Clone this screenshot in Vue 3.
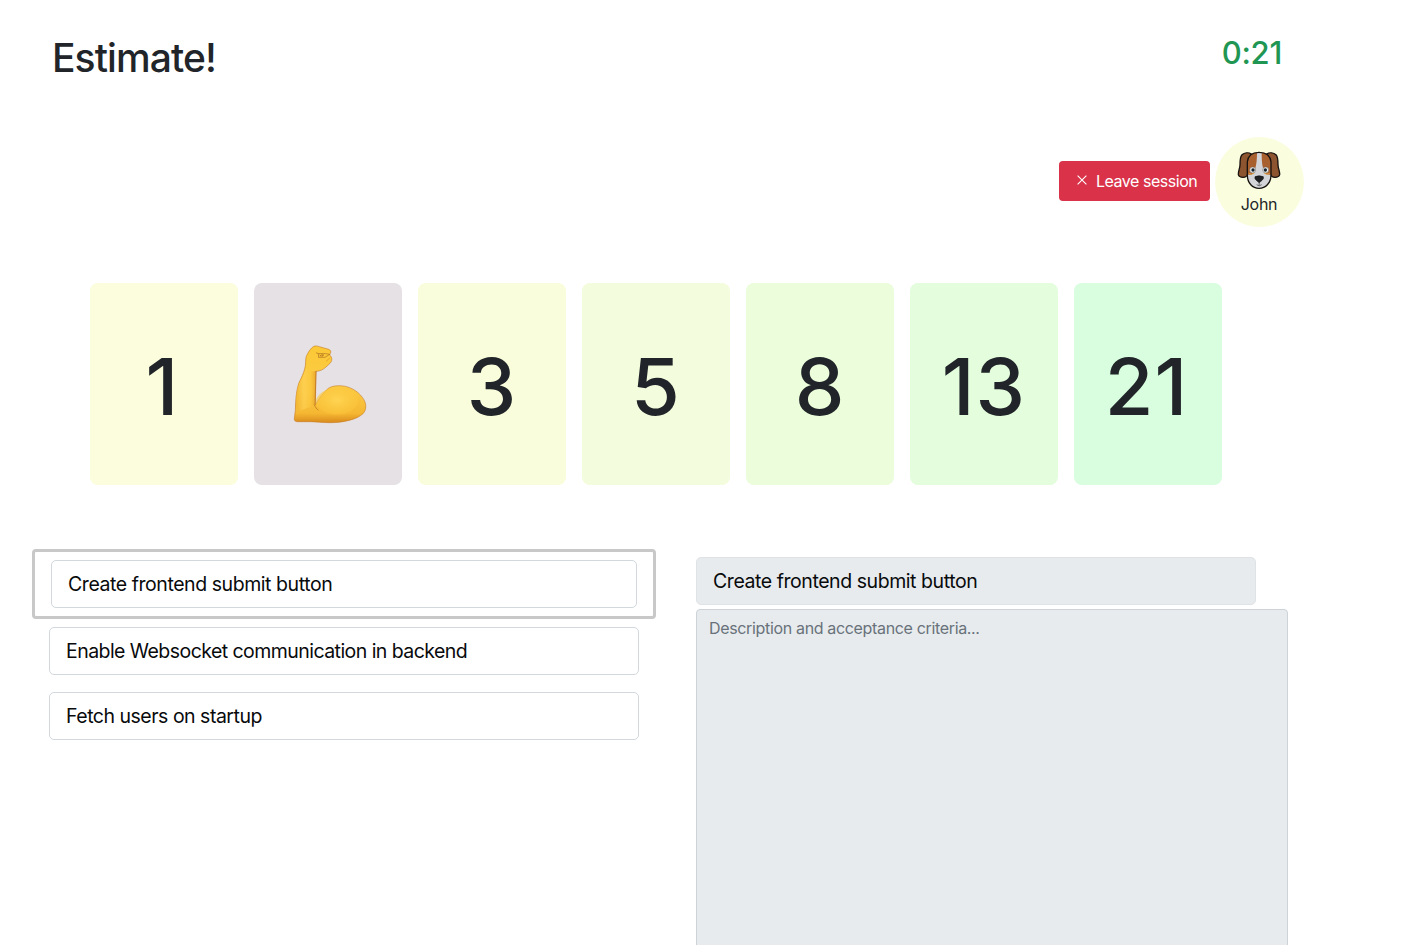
<script setup>
const cards = [
  { value: '1', tone: 't1' },
  { value: '2', tone: 'picked', picked: true },
  { value: '3', tone: 't3' },
  { value: '5', tone: 't5' },
  { value: '8', tone: 't8' },
  { value: '13', tone: 't13' },
  { value: '21', tone: 't21' },
]
</script>

<template>
  <main class="page">
    <header class="header">
      <h1 class="title">Estimate!</h1>
      <div class="timer">0:21</div>
    </header>

    <section class="user-bar">
      <button class="leave">
        <svg class="cross" viewBox="0 0 10 10"><path d="M.6 .6 9.4 9.4M9.4 .6 .6 9.4" /></svg>
        <span class="leave-text">Leave session</span>
      </button>
      <div class="avatar">
        <svg class="dog" viewBox="9 9 132 116">
          <defs>
            <clipPath id="head"><path d="M75 13C54 13 42 23 40 42V80C40 106 56 121 75 121S111 106 111 80V42C109 23 97 13 75 13Z" /></clipPath>
          </defs>
          <g stroke="#17120f" stroke-width="4" stroke-linejoin="round" fill="#8d552f">
            <path d="M52 18C43 12 31 14 24 20C18 26 18 36 18 50C18 62 12 70 13 80C15 87 22 88 27 88C35 88 40 84 42 77Z" />
            <path d="M98 18C107 12 119 14 126 20C132 26 132 36 132 50C132 62 138 70 137 80C135 87 128 88 123 88C115 88 111 84 109 77Z" />
          </g>
          <g clip-path="url(#head)">
            <path fill="#a9602f" d="M36 10H115V124H36Z" />
            <path fill="#d3d4d8" d="M69 10H83C83 40 84 58 93 75C99 83 107 78 115 82V124H36V82C44 78 53 83 58 75C67 58 69 40 69 10Z" />
          </g>
          <path fill="none" stroke="#17120f" stroke-width="4" d="M75 13C54 13 42 23 40 42V80C40 106 56 121 75 121S111 106 111 80V42C109 23 97 13 75 13Z" />
          <path fill="none" stroke="#e9a33b" stroke-width="3" d="M44 76Q52 82 61 75M90 75Q99 82 107 76" />
          <circle cx="56" cy="66" r="9" fill="#e6ecef" stroke="#71645d" stroke-width="1.5" />
          <circle cx="95" cy="66" r="9" fill="#e6ecef" stroke="#71645d" stroke-width="1.5" />
          <circle cx="57" cy="66" r="5" fill="#15202a" />
          <circle cx="94" cy="66" r="5" fill="#15202a" />
          <path fill="#202124" stroke="#111" stroke-width="2" stroke-linejoin="round" d="M63 86Q75 81 88 86Q90 92 84 97L75.500 104L67 97Q61 92 63 86Z" />
          <path fill="none" stroke="#333" stroke-width="2" d="M75.500 103V112M68 110Q75.500 117 83 110" />
        </svg>
        <span class="name">John</span>
      </div>
    </section>

    <section class="cards">
      <div v-for="card in cards" :key="card.value" class="card" :class="card.tone">
        <svg v-if="card.picked" class="arm" viewBox="40 40 225 240">
          <defs>
            <linearGradient id="skin" x1="0" y1="0" x2="0" y2="1">
              <stop offset="0" stop-color="#fbc936" />
              <stop offset=".6" stop-color="#fccb46" />
              <stop offset=".88" stop-color="#f5b732" />
              <stop offset="1" stop-color="#d98a1d" />
            </linearGradient>
            <linearGradient id="forearm" x1="0" y1="0" x2="1" y2="0">
              <stop offset="0" stop-color="#eeb02b" />
              <stop offset=".4" stop-color="#ffd256" />
              <stop offset=".75" stop-color="#fbc63d" />
              <stop offset="1" stop-color="#e39c25" />
            </linearGradient>
            <radialGradient id="bicep" cx=".45" cy=".4" r=".65">
              <stop offset="0" stop-color="#ffd452" />
              <stop offset=".65" stop-color="#fbc53b" stop-opacity=".6" />
              <stop offset=".8" stop-color="#f2ae2a" stop-opacity="0" />
            </radialGradient>
          </defs>
          <path fill="url(#skin)" stroke="#c87b1d" stroke-width="1.8" stroke-linejoin="round" d="M103 47C107 45 113 46 119 48L147 56C153 58 155 63 152 68L150 73L155 79C158 86 156 93 151 98L138 110C130 117 120 122 109 122L107 222C119 202 132 185 146 173C161 163 184 164 201 168C229 176 248 195 256 214C260 226 259 240 250 249C231 267 190 276 151 276C128 276 108 273 90 273L53 273C46 273 43 269 44 263L47 240C48 208 49 184 57 158C67 138 71 129 75 115C79 102 77 91 79 80C84 66 94 51 103 47Z" />
          <path fill="url(#forearm)" d="M79 112C85 122 98 124 108 121L105 220C98 226 70 240 53 240C47 224 50 210 51 188C53 158 72 144 79 112Z" opacity=".65" />
          <ellipse cx="179" cy="218" rx="72" ry="48" fill="url(#bicep)" />
          <path fill="none" stroke="#b96b16" stroke-width="2" stroke-linecap="round" d="M109 122L106 222M104 223Q108 233 115 238" />
          <g fill="none" stroke="#a8661b" stroke-width="1.8" stroke-linecap="round" stroke-linejoin="round">
            <path d="M110 67C118 71 130 67 138 69L150 71L136 80L117 80M116 70L117 79" />
            <path d="M121 73L124 77M125 73H132L128 76" stroke-width="2.4" />
          </g>
          <path fill="none" stroke="#df9422" stroke-width="2" d="M151 81Q145 88 139 92" />
        </svg>
        <span v-else>{{ card.value }}</span>
      </div>
    </section>

    <section class="board">
      <div class="stories">
        <div class="active"><div class="story s1"><span>Create frontend submit button</span></div></div>
        <div class="story s2"><span>Enable Websocket communication in backend</span></div>
        <div class="story s3"><span>Fetch users on startup</span></div>
      </div>
      <div class="detail">
        <div class="detail-title s1"><span>Create frontend submit button</span></div>
        <div class="description"><span>Description and acceptance criteria...</span></div>
      </div>
    </section>
  </main>
</template>

<style>
body {
  background: #fff;
}
</style>

<style scoped>
* {
  box-sizing: border-box;
}
.page {
  width: 1401px;
  height: 945px;
  overflow: hidden;
  background: #fff;
  color: #212529;
  font-family: Inter, "Liberation Sans", sans-serif;
}
.header {
  display: flex;
  justify-content: space-between;
  height: 137px;
  padding: 33px 119px 0 52px;
}
.title {
  margin: 0;
  font-size: 39px;
  font-weight: 500;
  line-height: 50px;
  letter-spacing: -0.9px;
}
.timer {
  color: #219653;
  font-size: 31px;
  font-weight: 500;
  line-height: 40px;
  letter-spacing: -0.3px;
}
.user-bar {
  display: flex;
  justify-content: flex-end;
  align-items: center;
  gap: 5px;
  height: 90px;
  padding-right: 97px;
}
.leave {
  display: flex;
  align-items: center;
  width: 151px;
  height: 40px;
  margin-bottom: 2px;
  padding: 0 0 0 18px;
  border: 0;
  border-radius: 4px;
  background: #d93249;
  color: #fff;
  font-family: inherit;
  font-size: 16px;
  white-space: nowrap;
}
.cross {
  width: 10px;
  height: 10px;
  margin: -3px 9px 0 0;
  fill: none;
  stroke: #fff;
  stroke-width: 1.1;
}
.leave-text {
  letter-spacing: -0.47px;
}
.avatar {
  display: flex;
  flex-direction: column;
  align-items: center;
  width: 89px;
  height: 90px;
  padding: 14px 2px 0 0;
  border-radius: 50%;
  background: #fbfddf;
}
.dog {
  width: 44px;
  height: 38.7px;
}
.name {
  margin-top: 3px;
  padding-left: 1px;
  font-size: 16px;
  line-height: 22px;
  letter-spacing: -0.3px;
}
.cards {
  display: flex;
  gap: 16px;
  padding: 56px 0 0 90px;
}
.card {
  display: flex;
  justify-content: center;
  align-items: center;
  width: 148px;
  height: 202px;
  padding-top: 3px;
  border-radius: 8px;
  font-size: 79px;
  font-weight: 550;
  letter-spacing: 1px;
}
.t1 { background: #fbfddc; }
.picked { background: #e6e1e5; }
.t3 { background: #f9fddb; }
.t5 { background: #f3fcdc; }
.t8 { background: #ebfddb; }
.t13 { background: #e3fddd; }
.t21 { background: #d9fddf; }
.t1,
.t21 {
  padding-right: 3px;
}
.arm {
  width: 75px;
  height: 80px;
  margin: -4px 0 0 5px;
}
.board {
  display: flex;
  align-items: flex-start;
  gap: 40px;
  padding: 64px 0 0 32px;
  color: #080a0c;
}
.stories {
  width: 624px;
}
.active {
  height: 70px;
  margin-bottom: 8px;
  padding: 8px 16px;
  border: 3px solid #c8c8c8;
  border-radius: 4px;
}
.story {
  display: flex;
  align-items: center;
  height: 48px;
  padding-left: 16px;
  border: 1px solid #d2d8dd;
  border-radius: 5px;
  background: #fff;
  font-size: 19.5px;
  white-space: nowrap;
}
.stories > .story {
  margin: 0 17px;
}
.stories > .story + .story {
  margin-top: 17px;
}
.s1 { letter-spacing: -0.44px; }
.s2 { letter-spacing: -0.55px; }
.s3 { letter-spacing: -0.49px; }
.detail {
  width: 592px;
  padding-top: 8px;
}
.detail-title {
  display: flex;
  align-items: center;
  width: 560px;
  height: 48px;
  padding-left: 16px;
  border: 1px solid #dfe3e6;
  border-radius: 5px;
  background: #e7ebee;
  font-size: 19.5px;
}
.description {
  height: 380px;
  margin-top: 4px;
  padding: 6px 12px;
  border: 1px solid #cdd3d9;
  border-radius: 4px;
  background: #e7ebee;
  color: #69727a;
  font-size: 16px;
  line-height: 24px;
  letter-spacing: -0.34px;
}
</style>
